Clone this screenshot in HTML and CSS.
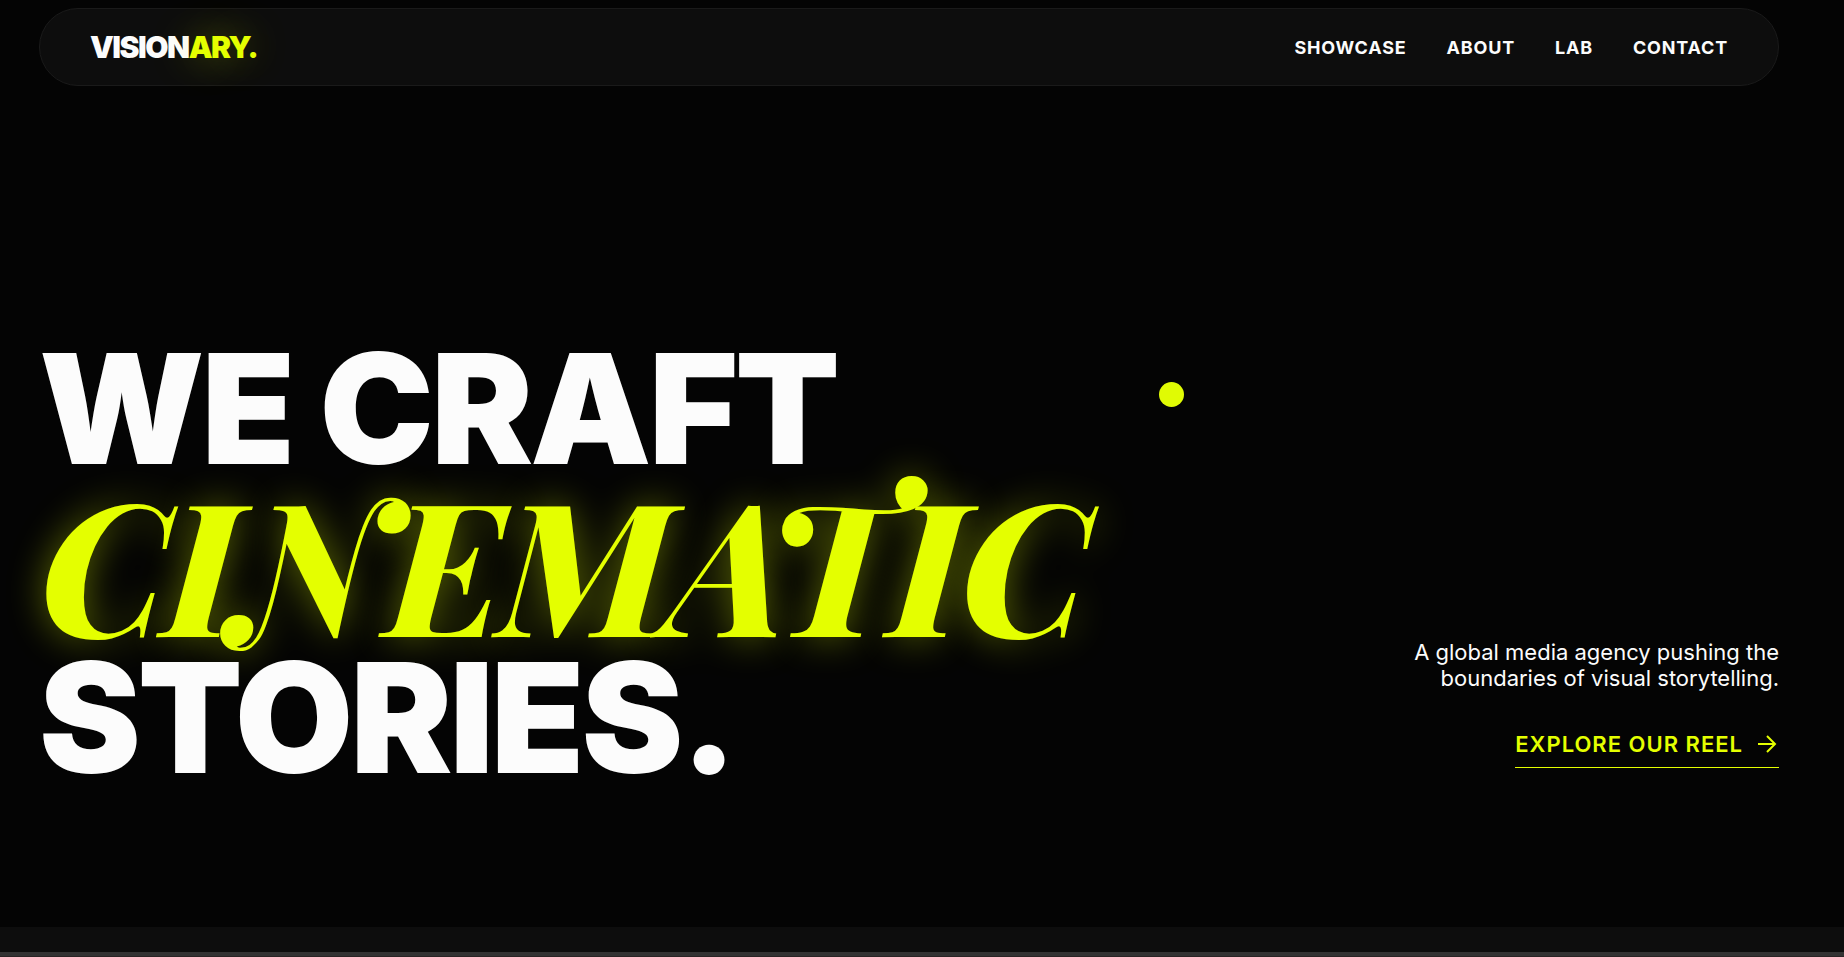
FILE: index.html
```
<!DOCTYPE html>
<html lang="en">
<head>
    <meta charset="UTF-8">
    <meta name="viewport" content="width=device-width, initial-scale=1.0">
    <title>Visionary</title>
    <link rel="stylesheet" href="styles.css">
</head>
<body>
    <!-- Custom cursor -->
    <div class="cursor"></div>

    <header class="site-header">
        <nav class="navbar">
            <a href="#" class="logo">VISION<span>ARY.</span></a>
            <ul class="nav-links">
                <li><a href="#showcase">Showcase</a></li>
                <li><a href="#about">About</a></li>
                <li><a href="#lab">Lab</a></li>
                <li><a href="#contact">Contact</a></li>
            </ul>
        </nav>
    </header>

    <section class="hero">
        <h1 class="hero-title">
            <span class="line">We craft</span>
            <span class="line accent">Cinematic</span>
            <span class="line">Stories.</span>
        </h1>
        <div class="hero-side">
            <p>A global media agency pushing the boundaries of visual storytelling.</p>
            <a href="#showcase" class="reel-link">
                Explore our reel
                <svg class="arrow" viewBox="0 0 24 24" fill="none" stroke="currentColor" stroke-width="2">
                    <path d="M3 12h16M12 4l8 8-8 8"/>
                </svg>
            </a>
        </div>
    </section>

    <!-- Showcase -->
    <section class="showcase" id="showcase">
        <div class="showcase-frame"></div>
    </section>
</body>
</html>
```
FILE: styles.css
```
:root {
    --bg: #040404;
    --panel: #0d0d0d;
    --text: #fcfcfc;
    --accent: #e4ff00;
}

* {
    margin: 0;
    padding: 0;
    box-sizing: border-box;
}

body {
    height: 100vh;
    overflow: hidden;
    display: flex;
    flex-direction: column;
    background-color: var(--bg);
    color: var(--text);
    font-family: 'Inter', sans-serif;
}

a {
    color: inherit;
    text-decoration: none;
}

.cursor {
    position: absolute;
    top: 382px;
    left: 1159px;
    width: 25px;
    height: 25px;
    border-radius: 50%;
    background-color: #e0fb04;
    z-index: 10;
    pointer-events: none;
}

/* Navbar */
.site-header {
    padding: 8px 65px 0 39px;
}

.navbar {
    display: flex;
    justify-content: space-between;
    align-items: center;
    height: 78px;
    padding: 0 50px;
    background-color: var(--panel);
    border: 1px solid #1a1a1a;
    border-radius: 40px;
}

.logo {
    font-size: 30px;
    font-weight: 900;
    letter-spacing: -0.05em;
}

.logo span {
    color: var(--accent);
    text-shadow: 0 0 40px rgba(228, 255, 0, 0.4);
}

.nav-links {
    display: flex;
    gap: 40px;
    list-style: none;
    font-size: 18px;
    font-weight: 700;
    letter-spacing: 0.045em;
    text-transform: uppercase;
}

/* Hero */
.hero {
    flex: 1;
    display: flex;
    justify-content: space-between;
    align-items: flex-end;
    padding: 0 65px 144px 39px;
}

.hero-title {
    font-size: 153px;
    font-weight: 900;
    line-height: 131px;
    letter-spacing: -0.02em;
    text-transform: uppercase;
}

.line {
    display: block;
    white-space: nowrap;
}

.accent {
    padding-bottom: 4px;
    font-family: 'Playfair Display', 'Liberation Serif', serif;
    font-size: 184px;
    font-style: italic;
    font-weight: 800;
    line-height: 174px;
    color: var(--accent);
    letter-spacing: -0.02em;
    text-shadow: 0 0 38px rgba(228, 255, 0, 0.4);
}

.hero-side {
    display: flex;
    flex-direction: column;
    align-items: flex-end;
    gap: 40px;
    width: 400px;
    padding-bottom: 15px;
    font-size: 22px;
    line-height: 26px;
    text-align: right;
}

.reel-link {
    display: flex;
    align-items: center;
    gap: 12px;
    padding-bottom: 10px;
    border-bottom: 1px solid var(--accent);
    color: var(--accent);
    font-weight: 600;
    letter-spacing: 1px;
    text-transform: uppercase;
}

.arrow {
    width: 24px;
    height: 24px;
}

/* Showcase */
.showcase {
    height: 30px;
    padding-top: 25px;
    background-color: var(--panel);
}

.showcase-frame {
    height: 100%;
    background-color: #2a2425;
    border-top: 4px solid #333;
}
```
